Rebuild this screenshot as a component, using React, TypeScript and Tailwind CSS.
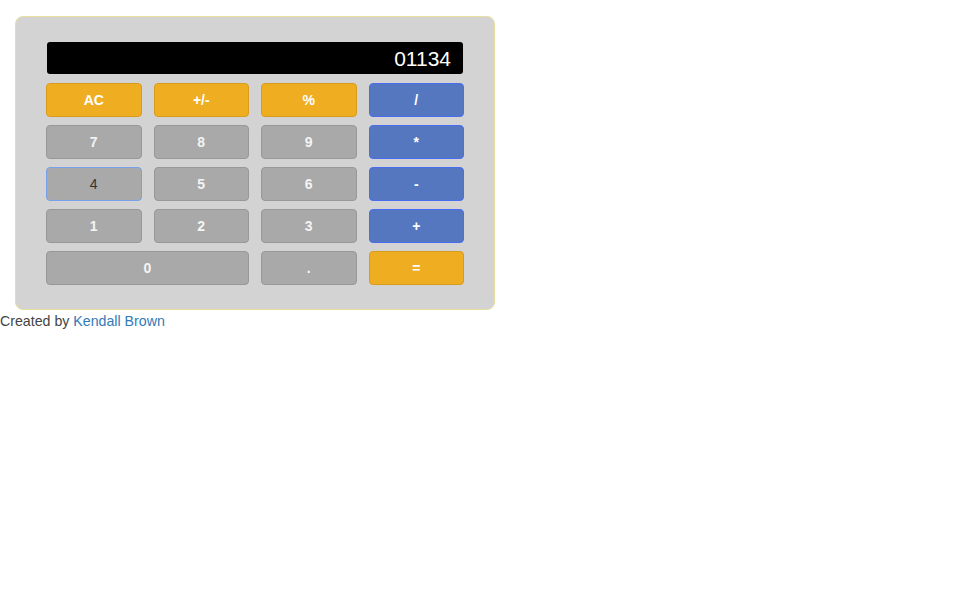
import React from "react";

type B = { label: string; kind: "o" | "b" | "g" | "f"; span?: boolean };

const buttons: B[] = [
  { label: "AC", kind: "o" },
  { label: "+/-", kind: "o" },
  { label: "%", kind: "o" },
  { label: "/", kind: "b" },
  { label: "7", kind: "g" },
  { label: "8", kind: "g" },
  { label: "9", kind: "g" },
  { label: "*", kind: "b" },
  { label: "4", kind: "f" },
  { label: "5", kind: "g" },
  { label: "6", kind: "g" },
  { label: "-", kind: "b" },
  { label: "1", kind: "g" },
  { label: "2", kind: "g" },
  { label: "3", kind: "g" },
  { label: "+", kind: "b" },
  { label: "0", kind: "g", span: true },
  { label: ".", kind: "g" },
  { label: "=", kind: "o" },
];

function cls(b: B) {
  const base =
    "h-[34px] rounded-[4px] border text-[14px] flex items-center justify-center ";
  const span = b.span ? "col-span-2 " : "";
  if (b.kind === "o")
    return base + span + "bg-[#efad22] border-[#d89c1c] text-white font-bold";
  if (b.kind === "b")
    return base + span + "bg-[#5477c0] border-[#4a6cf0] text-white font-semibold";
  if (b.kind === "f")
    return base + span + "bg-[#a9a9a9] border-[#78a0e8] text-[#333333] font-normal";
  return base + span + "bg-[#a9a9a9] border-[#989898] text-[#f4f4f4] font-bold";
}

export default function App() {
  return (
    <div className="font-['Liberation_Sans',Arial,sans-serif] text-[14px] text-[#333333]">
      <div className="ml-[15px] mt-[16px] w-[480px] rounded-[8px] border border-[#e6dfa0] bg-[#d3d3d3] pl-[30px] pr-[30px] pt-[25px] pb-[24px]">
        <div className="mx-[1px] h-[32px] rounded-[3px] bg-black text-white text-[21px] flex items-center justify-end pr-[12px] pt-[2px]">
          01134
        </div>
        <div className="mt-[9px] grid grid-cols-4 gap-x-[12px] gap-y-[8px]">
          {buttons.map((b) => (
            <div key={b.label} className={cls(b)}>
              {b.label}
            </div>
          ))}
        </div>
      </div>
      <div className="leading-[20px] mt-[1px] text-[14.2px] text-[#444444]">
        Created by <span className="text-[#337ab7]">Kendall Brown</span>
      </div>
    </div>
  );
}
